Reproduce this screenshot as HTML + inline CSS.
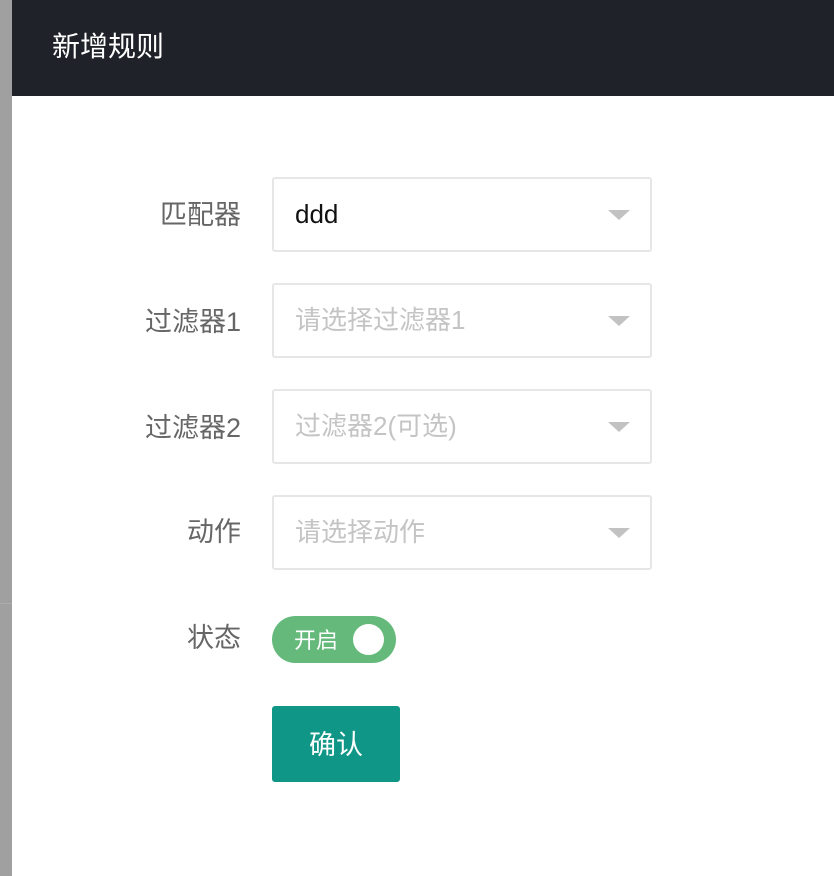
<!DOCTYPE html>
<html><head><meta charset="utf-8"><style>
*{margin:0;padding:0;box-sizing:border-box}
body{width:834px;height:876px;overflow:hidden;background:#fff;font-family:"Liberation Sans","Noto Sans CJK SC",sans-serif;position:relative}
.strip{position:absolute;left:0;top:0;width:12px;height:876px;background:#a0a0a0}
.strip2{position:absolute;left:0;top:603px;width:12px;height:1px;background:#acacac}
.hdr{position:absolute;left:12px;top:0;width:822px;height:96px;background:#202229;color:#fff;font-size:28px;line-height:94px;padding-left:40px}
.lbl{position:absolute;right:593px;font-size:27px;line-height:30px;color:#666;white-space:nowrap}
.sel{position:absolute;left:272px;width:380px;height:75px;border:2px solid #e6e6e6;border-radius:3px;font-size:26px;line-height:70px;padding-left:21px;color:#c4c4c4}
.sel:after{content:"";position:absolute;right:20px;top:31px;border-left:11px solid transparent;border-right:11px solid transparent;border-top:10px solid #c2c2c2}
.tog{position:absolute;left:272px;top:616px;width:124px;height:47px;border-radius:24px;background:#64b97b;color:#fff;font-size:22px;line-height:49px;padding-left:22px}
.knob{position:absolute;right:12px;top:8px;width:31px;height:31px;border-radius:50%;background:#fff}
.btn{position:absolute;left:272px;top:706px;width:128px;height:76px;background:#109687;border-radius:3px;color:#fff;font-size:27px;line-height:78px;text-align:center}
</style></head><body>
<div class="strip"></div><div class="strip2"></div>
<div class="hdr">新增规则</div>
<div class="lbl" style="top:200px">匹配器</div>
<div class="sel" style="top:177px;color:#111">ddd</div>
<div class="lbl" style="top:307px">过滤器1</div>
<div class="sel" style="top:283px">请选择过滤器1</div>
<div class="lbl" style="top:413px">过滤器2</div>
<div class="sel" style="top:389px">过滤器2(可选)</div>
<div class="lbl" style="top:517px">动作</div>
<div class="sel" style="top:495px">请选择动作</div>
<div class="lbl" style="top:623px">状态</div>
<div class="tog">开启<div class="knob"></div></div>
<div class="btn">确认</div>
</body></html>
